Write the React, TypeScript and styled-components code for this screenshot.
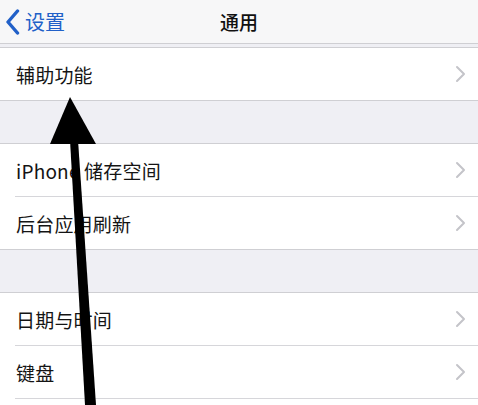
import styled, { createGlobalStyle } from "styled-components";

const GlobalStyle = createGlobalStyle`
  html, body {
    margin: 0;
    padding: 0;
    background: #efeff4;
    overflow: hidden;
  }
  body {
    font-family: "Noto Sans CJK SC", "Noto Sans", sans-serif;
  }
`;

const Page = styled.div`
  position: relative;
  width: 478px;
  height: 405px;
  overflow: hidden;
  background: #efeff4;
`;

const NavBar = styled.header`
  height: 43px;
  background: #f7f7f8;
  border-bottom: 1px solid #cfcfd3;
  display: flex;
  align-items: center;
  position: relative;
`;

const BackButton = styled.button`
  display: flex;
  align-items: center;
  gap: 5px;
  border: 0;
  background: none;
  padding: 0 0 0 5px;
  height: 100%;
  color: #2160c8;
  font-family: inherit;
  font-size: 20px;
  line-height: 1;
`;

const NavTitle = styled.h1`
  margin: 0;
  position: absolute;
  left: 0;
  right: 0;
  text-align: center;
  font-size: 19px;
  font-weight: 500;
  color: #111;
  pointer-events: none;
`;

const Gap = styled.div<{ $h: number }>`
  height: ${(p) => p.$h}px;
`;

const Group = styled.ul<{ $open?: boolean }>`
  list-style: none;
  margin: 0;
  padding: 0;
  background: #fff;
  border-top: 1px solid #cfcfd3;
  border-bottom: ${(p) => (p.$open ? "0" : "1px solid #cfcfd3")};
`;

const Row = styled.li`
  height: 52px;
  display: flex;
  align-items: center;
  justify-content: space-between;
  padding: 0 12px 0 16px;
  position: relative;

  & + &::before {
    content: "";
    position: absolute;
    top: -1px;
    left: 15px;
    right: 0;
    border-top: 1px solid #d6d6da;
  }
  & + & {
    margin-top: 1px;
  }
`;

const Label = styled.span`
  font-size: 19px;
  color: #141414;
  letter-spacing: 0.2px;
`;

const Arrow = styled.svg`
  position: absolute;
  top: 0;
  left: 0;
  pointer-events: none;
`;

const Chevron = () => (
  <svg width="12" height="18" viewBox="0 0 12 18">
    <path d="M3 2 L10 9 L3 16" fill="none" stroke="#c4c4c9" strokeWidth="2" strokeLinecap="round" strokeLinejoin="round" />
  </svg>
);

const groups = [
  ["辅助功能"],
  ["iPhone 储存空间", "后台应用刷新"],
  ["日期与时间", "键盘", ""],
];

export default function App() {
  return (
    <Page>
      <GlobalStyle />
      <NavBar>
        <BackButton>
          <svg width="15" height="26" viewBox="0 0 15 26">
            <path d="M12.5 2 L3 13 L12.5 24" fill="none" stroke="#2160c8" strokeWidth="3.4" strokeLinecap="round" strokeLinejoin="round" />
          </svg>
          设置
        </BackButton>
        <NavTitle>通用</NavTitle>
      </NavBar>
      {groups.map((items, i) => (
        <div key={i}>
          <Gap $h={i === 0 ? 3 : 42} />
          <Group $open={i === groups.length - 1}>
            {items.map((t, j) => (
              <Row key={j}>
                {t && <Label>{t}</Label>}
                {t && <Chevron />}
              </Row>
            ))}
          </Group>
        </div>
      ))}
      <Arrow width="478" height="405" viewBox="0 0 478 405">
        <polygon points="70,140 78,140 96,405 85,405" fill="#000" />
        <polygon points="70,97 50,144 96,144" fill="#000" />
      </Arrow>
    </Page>
  );
}
